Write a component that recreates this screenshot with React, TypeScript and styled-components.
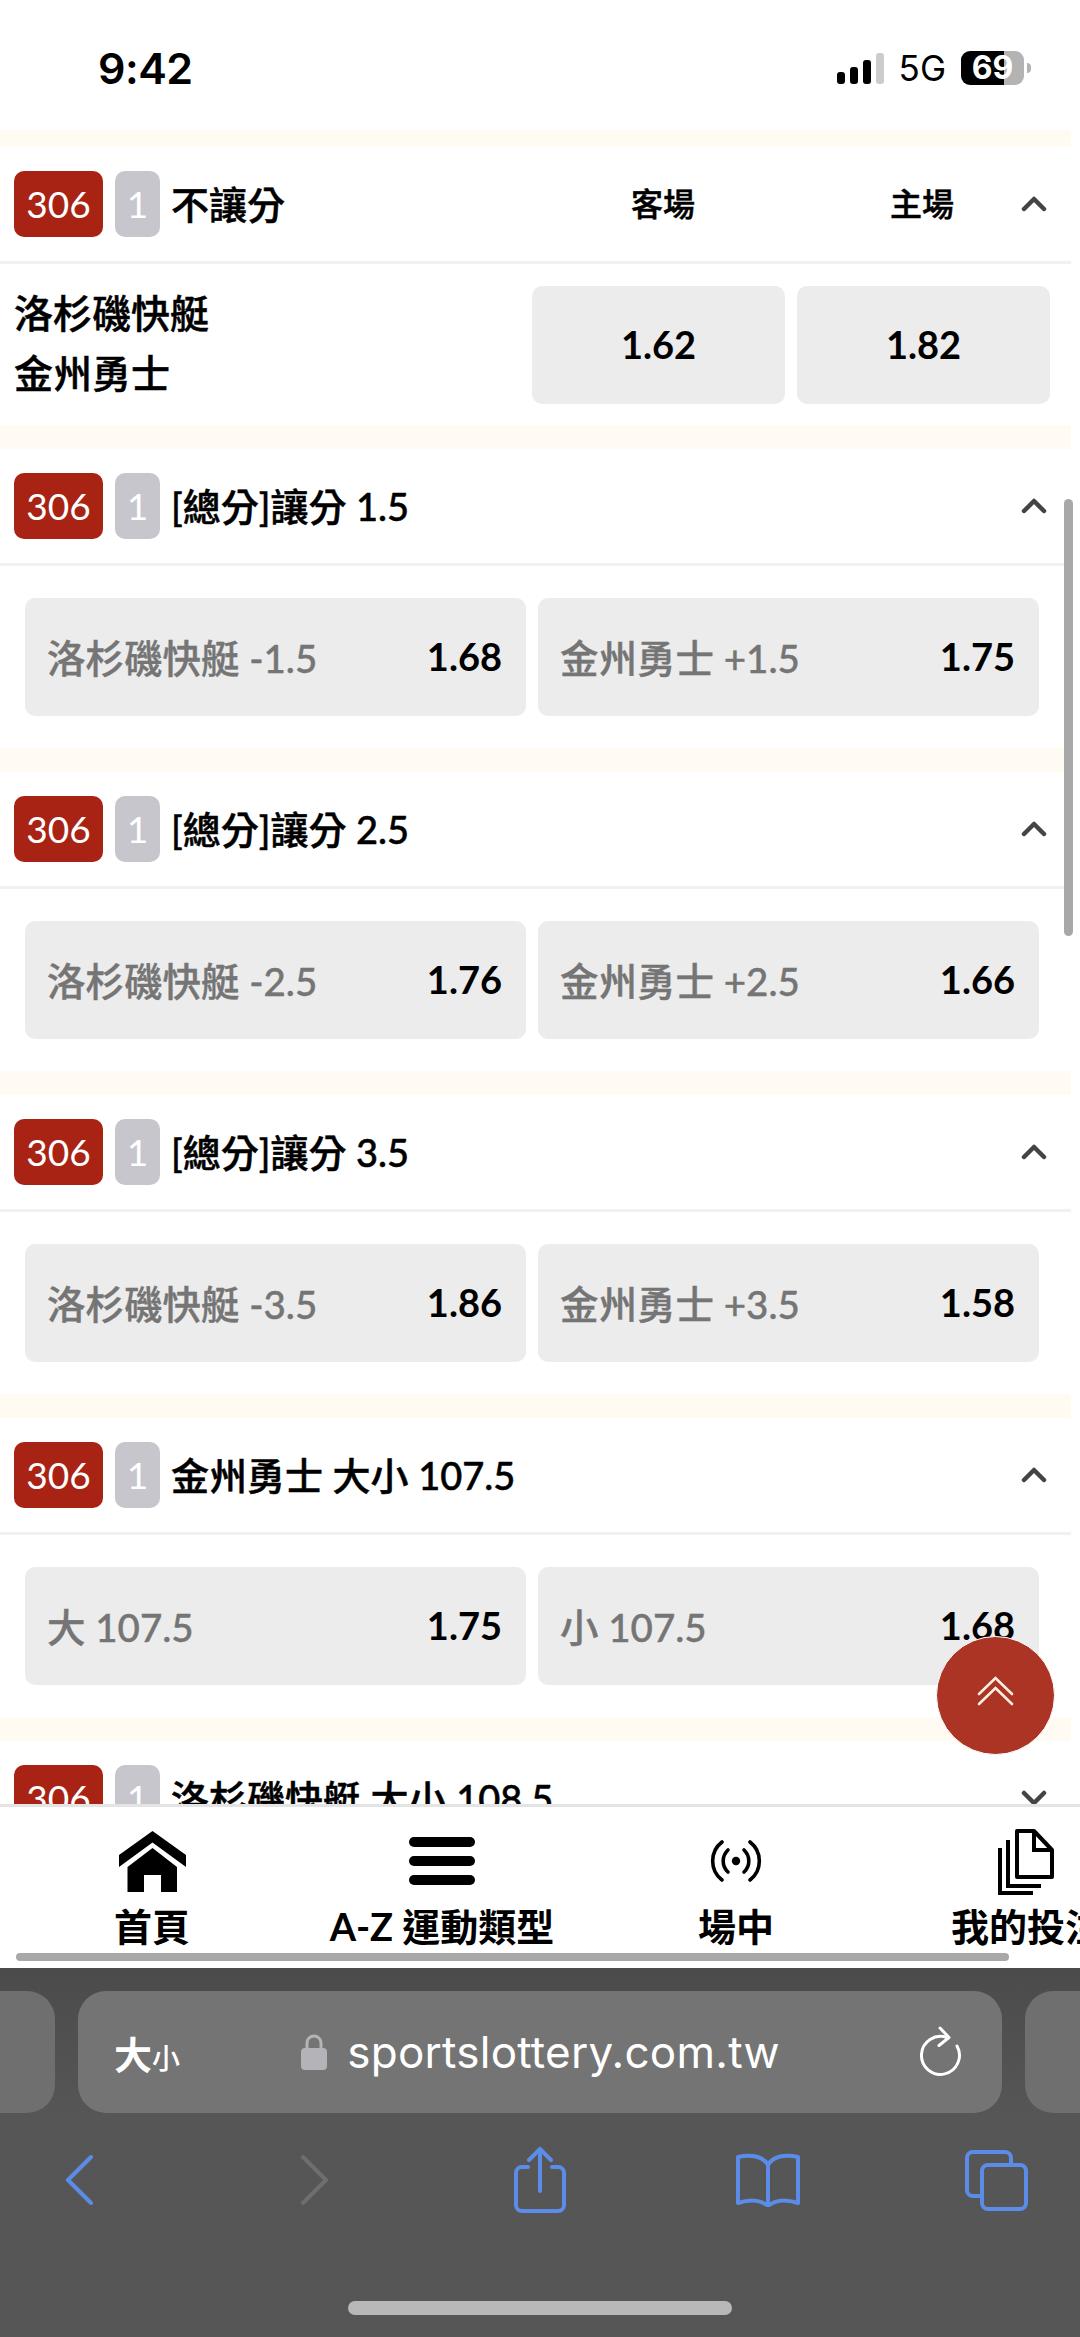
import React from "react";
import styled, { createGlobalStyle } from "styled-components";

const sansStack = `Lato, "Noto Sans CJK TC", sans-serif`;

type Market = {
  title: string;
  left: [string, string];
  right: [string, string];
};

const markets: Market[] = [
  { title: "[總分]讓分 1.5", left: ["洛杉磯快艇 -1.5", "1.68"], right: ["金州勇士 +1.5", "1.75"] },
  { title: "[總分]讓分 2.5", left: ["洛杉磯快艇 -2.5", "1.76"], right: ["金州勇士 +2.5", "1.66"] },
  { title: "[總分]讓分 3.5", left: ["洛杉磯快艇 -3.5", "1.86"], right: ["金州勇士 +3.5", "1.58"] },
  { title: "金州勇士 大小 107.5", left: ["大 107.5", "1.75"], right: ["小 107.5", "1.68"] },
];

const Chevron = ({ down }: { down?: boolean }) => (
  <ChevronSvg viewBox="0 0 26 18" width="26" height="18">
    <path
      d={down ? "M3 4l10 10L23 4" : "M3 14L13 4l10 10"}
      fill="none"
      stroke="#444"
      strokeWidth="4.5"
      strokeLinecap="round"
      strokeLinejoin="round"
    />
  </ChevronSvg>
);

const Badges = () => (
  <>
    <CodeBadge>306</CodeBadge>
    <SubBadge>1</SubBadge>
  </>
);

export default function App() {
  return (
    <Screen>
      <GlobalStyle />
      <StatusBar>
        <Clock>9:42</Clock>
        <StatusIcons>
          <svg width="47" height="31" viewBox="0 0 47 31">
            <rect x="0" y="19" width="8" height="12" rx="3" fill="#000" />
            <rect x="13" y="14" width="8" height="17" rx="3" fill="#000" />
            <rect x="26" y="7" width="8" height="24" rx="3" fill="#000" />
            <rect x="39" y="0" width="8" height="31" rx="3" fill="#ccc" />
          </svg>
          <Network>5G</Network>
          <Battery>69</Battery>
          <BatteryNub />
        </StatusIcons>
      </StatusBar>

      <Content>
        <SectionList>
          <FirstSection>
            <SectionHeader>
              <Badges />
              <SectionTitle>不讓分</SectionTitle>
              <ColumnLabel $after={195}>客場</ColumnLabel>
              <ColumnLabel $after={67}>主場</ColumnLabel>
              <Chevron />
            </SectionHeader>
            <MatchRow>
              <Teams>
                <div>洛杉磯快艇</div>
                <div>金州勇士</div>
              </Teams>
              <OddsPair>
                <OddsButton>1.62</OddsButton>
                <OddsButton>1.82</OddsButton>
              </OddsPair>
            </MatchRow>
          </FirstSection>

          {markets.map((m) => (
            <Section key={m.title}>
              <SectionHeader>
                <Badges />
                <SectionTitle>{m.title}</SectionTitle>
                <Chevron />
              </SectionHeader>
              <BetRow>
                {[m.left, m.right].map(([label, odds]) => (
                  <BetButton key={label}>
                    <BetLabel>{label}</BetLabel>
                    <BetOdds>{odds}</BetOdds>
                  </BetButton>
                ))}
              </BetRow>
            </Section>
          ))}

          <Section>
            <SectionHeader>
              <Badges />
              <SectionTitle>洛杉磯快艇 大小 108.5</SectionTitle>
              <Chevron down />
            </SectionHeader>
          </Section>
        </SectionList>

        <ScrollThumb />
        <BackToTop aria-label="top">
          <svg width="37" height="31" viewBox="0 0 37 31">
            <path
              d="M2 19L18.5 3 35 19M2 29l16.5-16L35 29"
              fill="none"
              stroke="#fdeee0"
              strokeWidth="2.6"
              strokeLinecap="round"
            />
          </svg>
        </BackToTop>
      </Content>

      <BottomNav>
        <NavTabs>
          <NavTab $width={304}>
            <NavIcon>
              <svg width="67" height="61" viewBox="0 0 67 61">
                <path d="M33.5 0L67 24v12L33.5 11.5 0 36V24z" fill="#000" />
                <path d="M33.5 17L58 36v25H42V44H25v17H8.500V36z" fill="#000" />
              </svg>
            </NavIcon>
            首頁
          </NavTab>
          <NavTab $width={276}>
            <NavIcon>
              <svg width="66" height="48" viewBox="0 0 66 48">
                <rect x="0" y="0" width="66" height="10" rx="5" fill="#000" />
                <rect x="0" y="19" width="66" height="10" rx="5" fill="#000" />
                <rect x="0" y="38" width="66" height="10" rx="5" fill="#000" />
              </svg>
            </NavIcon>
            A-Z 運動類型
          </NavTab>
          <NavTab $width={312}>
            <NavIcon>
              <svg width="52" height="42" viewBox="0 0 52 42" fill="none" stroke="#000" strokeWidth="3.6" strokeLinecap="round">
                <circle cx="26" cy="21" r="4.2" fill="#000" stroke="none" />
                <path d="M18 10A15 15 0 0 0 18 32M34 10A15 15 0 0 1 34 32" />
                <path d="M12 2A24 24 0 0 0 12 40M40 2A24 24 0 0 1 40 40" />
              </svg>
            </NavIcon>
            場中
          </NavTab>
          <NavTab $width={270}>
            <NavIcon>
              <svg width="60" height="67" viewBox="0 0 60 67" fill="none" stroke="#000" strokeWidth="4">
                <path d="M20 3h17l18 19v27H20z" strokeLinejoin="round" />
                <path d="M37 3v19h18" />
                <path d="M11 12v46h33" />
                <path d="M3 20v45h33" />
              </svg>
            </NavIcon>
            我的投注
          </NavTab>
        </NavTabs>
        <NavScrollTrack />
      </BottomNav>

      <Browser>
        <UrlRow>
          <SidePill $side="left" />
          <UrlPill>
            <TextSize>
              大<small>小</small>
            </TextSize>
            <UrlCenter>
              <svg width="26" height="36" viewBox="0 0 26 36">
                <path d="M6 16V9a7 7 0 0 1 14 0v7" fill="none" stroke="#b4b4b8" strokeWidth="3" />
                <rect x="0" y="14" width="26" height="22" rx="4" fill="#b4b4b8" />
              </svg>
              <UrlText>sportslottery.com.tw</UrlText>
            </UrlCenter>
            <svg width="44" height="52" viewBox="0 0 44 52" fill="none" stroke="#fff" strokeWidth="3" strokeLinecap="round" strokeLinejoin="round">
              <path d="M28 11.5A19 19 0 1 0 38 20" />
              <path d="M21 2l9 9.5-10 8" />
            </svg>
          </UrlPill>
          <SidePill $side="right" />
        </UrlRow>
        <ToolRow>
          <ToolSlot $left={65}>
            <svg width="28" height="50" viewBox="0 0 28 50" fill="none" stroke="#5b8de8" strokeWidth="4" strokeLinecap="round" strokeLinejoin="round">
              <path d="M26 2L3 25l23 23" />
            </svg>
          </ToolSlot>
          <ToolSlot $left={208}>
            <svg width="28" height="50" viewBox="0 0 28 50" fill="none" stroke="#6e6e6e" strokeWidth="4" strokeLinecap="round" strokeLinejoin="round">
              <path d="M2 2l23 23L2 48" />
            </svg>
          </ToolSlot>
          <ToolSlot $left={185}>
            <svg width="52" height="66" viewBox="0 0 52 66" fill="none" stroke="#5b8de8" strokeWidth="4" strokeLinecap="round" strokeLinejoin="round">
              <path d="M14 20H8a6 6 0 0 0-6 6v32a6 6 0 0 0 6 6h36a6 6 0 0 0 6-6V26a6 6 0 0 0-6-6h-6" />
              <path d="M26 44V3M15 13L26 2l11 11" />
            </svg>
          </ToolSlot>
          <ToolSlot $left={169}>
            <svg width="66" height="54" viewBox="0 0 66 54" fill="none" stroke="#5b8de8" strokeWidth="4" strokeLinejoin="round">
              <path d="M33 12C28 3 16 1 3 4v46c12-4 23-3 30 3 7-6 18-7 30-3V4C50 1 38 3 33 12z" />
              <path d="M33 12v41" />
            </svg>
          </ToolSlot>
          <ToolSlot $left={164}>
            <svg width="63" height="61" viewBox="0 0 63 61" fill="none" stroke="#5b8de8" strokeWidth="4" strokeLinejoin="round">
              <path d="M15 46H8a6 6 0 0 1-6-6V8a6 6 0 0 1 6-6h32a6 6 0 0 1 6 6v7" />
              <rect x="17" y="15" width="44" height="44" rx="6" />
            </svg>
          </ToolSlot>
        </ToolRow>
        <HomeIndicator />
      </Browser>
    </Screen>
  );
}

const GlobalStyle = createGlobalStyle`
  html, body {
    margin: 0;
    padding: 0;
    background: #fff;
  }
`;

const Screen = styled.div`
  width: 1080px;
  height: 2337px;
  display: flex;
  flex-direction: column;
  overflow: hidden;
  font-family: ${sansStack};
  background: #fff;
  color: #000;
`;

const StatusBar = styled.div`
  height: 130px;
  flex: none;
  display: flex;
  align-items: center;
  justify-content: space-between;
  padding: 6px 49px 0 98px;
  box-sizing: border-box;
`;

const Clock = styled.div`
  font-family: Inter, sans-serif;
  font-size: 43px;
  font-weight: 600;
  letter-spacing: -0.5px;
`;

const StatusIcons = styled.div`
  display: flex;
  align-items: center;
`;

const Network = styled.div`
  font-family: Inter, sans-serif;
  font-size: 35px;
  margin: 0 15px;
`;

const Battery = styled.div`
  width: 63px;
  height: 34px;
  border-radius: 9px;
  background: linear-gradient(90deg, #000 43px, #b3b3b3 43px);
  color: #fff;
  font-family: Inter, sans-serif;
  font-size: 32px;
  font-weight: 700;
  line-height: 34px;
  text-align: center;
`;

const BatteryNub = styled.div`
  width: 4px;
  height: 10px;
  margin-left: 3px;
  border-radius: 0 4px 4px 0;
  background: #b3b3b3;
`;

const Content = styled.div`
  position: relative;
  height: 1674px;
  flex: none;
  overflow: hidden;
`;

const SectionList = styled.div`
  width: 1071px;
  background: #fffbf2;
  padding-top: 17px;
`;

const Section = styled.section`
  background: #fff;
  margin-top: 24px;
`;

const FirstSection = styled(Section)`
  margin-top: 0;
`;

const SectionHeader = styled.div`
  height: 117px;
  box-sizing: border-box;
  display: flex;
  align-items: center;
  padding: 0 24px 0 14px;
  border-bottom: 3px solid #f1f1f1;
`;

const CodeBadge = styled.div`
  width: 89px;
  height: 66px;
  border-radius: 10px;
  background: #a92315;
  color: #fff;
  font-size: 37px;
  line-height: 66px;
  text-align: center;
  flex: none;
`;

const SubBadge = styled.div`
  width: 45px;
  height: 66px;
  margin-left: 12px;
  border-radius: 10px;
  background: #c6c6cc;
  color: #fff;
  font-size: 37px;
  line-height: 66px;
  text-align: center;
  flex: none;
`;

const SectionTitle = styled.div`
  flex: 1;
  margin-left: 11px;
  padding-bottom: 4px;
  font-size: 38px;
  font-weight: 500;
  -webkit-text-stroke: 0.5px #000;
  white-space: nowrap;
`;

const ColumnLabel = styled.div<{ $after: number }>`
  margin-right: ${(p) => p.$after}px;
  padding-bottom: 4px;
  font-size: 32px;
  font-weight: 500;
  -webkit-text-stroke: 0.5px #000;
`;

const ChevronSvg = styled.svg`
  flex: none;
`;

const MatchRow = styled.div`
  height: 161px;
  display: flex;
  align-items: center;
  justify-content: space-between;
  padding: 0 21px 0 14px;
`;

const Teams = styled.div`
  padding-bottom: 4px;
  font-size: 39px;
  font-weight: 500;
  -webkit-text-stroke: 0.5px #000;
  line-height: 60px;
`;

const OddsPair = styled.div`
  display: flex;
  gap: 12px;
`;

const OddsButton = styled.div`
  width: 253px;
  height: 118px;
  border-radius: 10px;
  background: #ececec;
  font-size: 38px;
  font-weight: 700;
  line-height: 116px;
  text-align: center;
`;

const BetRow = styled.div`
  height: 182px;
  display: grid;
  grid-template-columns: 501px 501px;
  column-gap: 12px;
  align-items: center;
  padding: 0 0 0 25px;
`;

const BetButton = styled.div`
  height: 118px;
  border-radius: 10px;
  background: #ececec;
  display: flex;
  align-items: center;
  justify-content: space-between;
  padding: 0 24px 3px 22px;
  box-sizing: border-box;
`;

const BetLabel = styled.div`
  font-size: 38.5px;
  color: #757575;
  font-weight: 500;
  -webkit-text-stroke: 0.4px #757575;
`;

const BetOdds = styled.div`
  font-size: 38px;
  font-weight: 700;
`;

const ScrollThumb = styled.div`
  position: absolute;
  right: 7px;
  top: 369px;
  width: 9px;
  height: 437px;
  border-radius: 5px;
  background: #a8a8a8;
`;

const BackToTop = styled.div`
  position: absolute;
  left: 936px;
  top: 1506px;
  width: 119px;
  height: 119px;
  box-sizing: border-box;
  border: 1px solid #fff;
  border-radius: 50%;
  background: #ab3425;
  display: flex;
  align-items: center;
  justify-content: center;
  padding-bottom: 10px;
`;

const BottomNav = styled.nav`
  height: 164px;
  flex: none;
  position: relative;
  background: #fff;
  border-top: 3px solid #e4e4e4;
  box-sizing: border-box;
`;

const NavTabs = styled.div`
  display: flex;
  overflow: hidden;
  padding-top: 21px;
`;

const NavTab = styled.div<{ $width: number }>`
  width: ${(p) => p.$width}px;
  flex: none;
  display: flex;
  flex-direction: column;
  align-items: center;
  font-size: 38px;
  font-weight: 700;
  line-height: 40px;
  white-space: nowrap;
`;

const NavIcon = styled.div`
  height: 66px;
  margin-bottom: 12px;
  display: flex;
  align-items: center;
  justify-content: center;
`;

const NavScrollTrack = styled.div`
  position: absolute;
  left: 16px;
  bottom: 7px;
  width: 993px;
  height: 8px;
  border-radius: 4px;
  background: #a8a8a8;
`;

const Browser = styled.div`
  flex: 1;
  min-height: 0;
  background: linear-gradient(180deg, #4b4b4b, #565656 40%);
  display: flex;
  flex-direction: column;
  position: relative;
`;

const UrlRow = styled.div`
  display: flex;
  justify-content: space-between;
  margin-top: 23px;
  height: 122px;
`;

const SidePill = styled.div<{ $side: "left" | "right" }>`
  width: 55px;
  background: #6f6f6f;
  border-radius: ${(p) => (p.$side === "left" ? "0 28px 28px 0" : "28px 0 0 28px")};
`;

const UrlPill = styled.div`
  width: 924px;
  background: #747474;
  border-radius: 28px;
  display: flex;
  align-items: center;
  justify-content: space-between;
  padding: 0 39px 0 36px;
  box-sizing: border-box;
  color: #fff;
`;

const TextSize = styled.div`
  font-size: 38px;
  font-weight: 700;
  width: 68px;

  small {
    font-size: 28px;
    font-weight: 500;
  }
`;

const UrlCenter = styled.div`
  display: flex;
  align-items: center;
  gap: 20px;
  margin-right: 20px;
`;

const UrlText = styled.div`
  font-family: Inter, sans-serif;
  font-size: 44px;
  letter-spacing: 0.25px;
`;

const ToolRow = styled.div`
  display: flex;
  align-items: center;
  height: 66px;
  margin-top: 34px;
`;

const ToolSlot = styled.div<{ $left: number }>`
  margin-left: ${(p) => p.$left}px;
  display: flex;
`;

const HomeIndicator = styled.div`
  position: absolute;
  left: 348px;
  bottom: 22px;
  width: 384px;
  height: 14px;
  border-radius: 7px;
  background: #b8b8b8;
`;
